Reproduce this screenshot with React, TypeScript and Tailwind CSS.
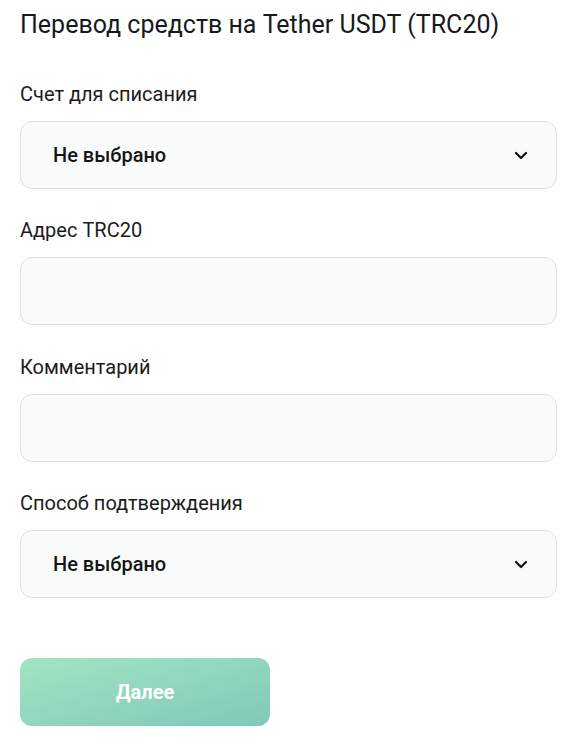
import React from "react";

function Chevron() {
  return (
    <svg width="14" height="9" viewBox="0 0 14 9" fill="none">
      <path d="M2 2l5 5 5-5" stroke="#111" strokeWidth="2.2" strokeLinecap="round" strokeLinejoin="round" />
    </svg>
  );
}

function Label({ children }: { children: React.ReactNode }) {
  return <div className="text-[20px] leading-[28px] text-[#1b1b1b]">{children}</div>;
}

function SelectBox() {
  return (
    <div className="h-[68px] rounded-[12px] border border-[#dbe2df] bg-[#f9fbfa] flex items-center justify-between pl-[32px] pr-[28px]">
      <span className="text-[20px] font-medium text-[#151515]">Не выбрано</span>
      <Chevron />
    </div>
  );
}

function InputBox() {
  return <div className="h-[68px] rounded-[12px] border border-[#dbe2df] bg-[#f9fbfa]" />;
}

export default function App() {
  return (
    <div className="w-[586px] h-[744px] bg-white px-[20px] pt-[8px] pr-[29px] font-['Roboto',sans-serif]">
      <h1 className="text-[25px] leading-[34px] text-[#151a1e] font-normal">Перевод средств на Tether USDT (TRC20)</h1>
      <div className="mt-[38px] flex flex-col gap-[13px]">
        <Label>Счет для списания</Label>
        <SelectBox />
      </div>
      <div className="mt-[27px] flex flex-col gap-[13px]">
        <Label>Адрес TRC20</Label>
        <InputBox />
      </div>
      <div className="mt-[28px] flex flex-col gap-[13px]">
        <Label>Комментарий</Label>
        <InputBox />
      </div>
      <div className="mt-[27px] flex flex-col gap-[13px]">
        <Label>Способ подтверждения</Label>
        <SelectBox />
      </div>
      <button className="mt-[60px] w-[250px] h-[68px] rounded-[12px] bg-gradient-to-br from-[#a3e5c2] to-[#7fc8b9] text-white text-[20px] font-bold">
        Далее
      </button>
    </div>
  );
}
